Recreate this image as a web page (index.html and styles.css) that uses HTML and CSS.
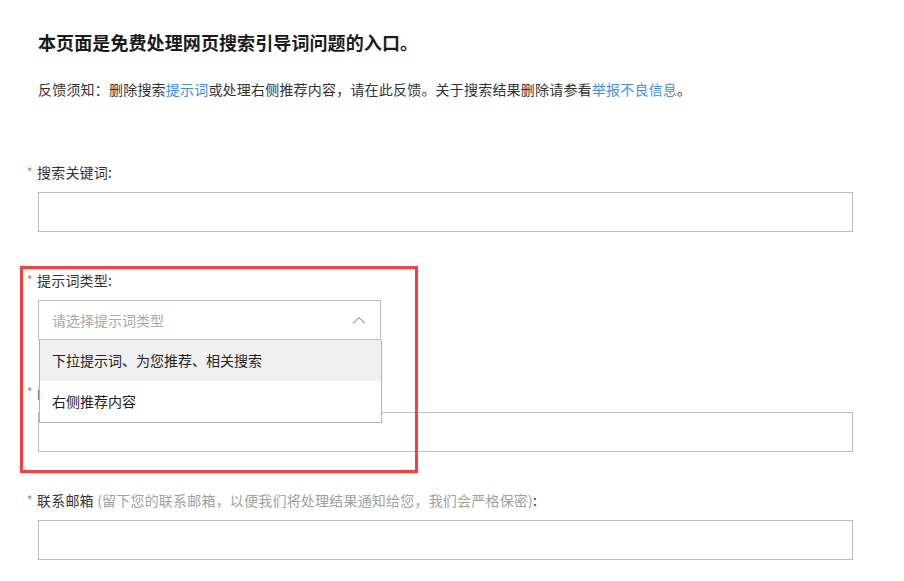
FILE: index.html
```html
<html>
<head>
    <meta charset="utf-8">
    <link rel="stylesheet" href="styles.css">
</head>
<body>
    <div class="page">
        <h1 class="title">本页面是免费处理网页搜索引导词问题的入口。</h1>
        <p class="notice">反馈须知：删除搜索<a href="#">提示词</a>或处理右侧推荐内容，请在此反馈。关于搜索结果删除请参看<a href="#">举报不良信息</a>。</p>

        <form class="form">
            <div class="field">
                <label class="label"><span class="star">*</span>搜索关键词:</label>
                <input class="input" type="text">
            </div>

            <div class="field field-select">
                <label class="label"><span class="star">*</span>提示词类型:</label>
                <div class="select">
                    <div class="select-box">
                        <span class="placeholder">请选择提示词类型</span>
                        <svg class="chevron" width="14" height="8" viewBox="0 0 14 8">
                            <polyline points="1,7.5 7,1.5 13,7.5" fill="none" stroke="#a8a8a8" stroke-width="1.2"/>
                        </svg>
                    </div>
                    <!-- dropdown open -->
                    <ul class="dropdown">
                        <li class="option active">下拉提示词、为您推荐、相关搜索</li>
                        <li class="option">右侧推荐内容</li>
                    </ul>
                </div>
            </div>

            <div class="field">
                <label class="label"><span class="star">*</span>问题描述:</label>
                <input class="input" type="text">
            </div>

            <div class="field">
                <label class="label"><span class="star">*</span>联系邮箱 <span class="hint">(留下您的联系邮箱，以便我们将处理结果通知给您，我们会严格保密)</span>:</label>
                <input class="input" type="text">
            </div>
        </form>

        <!-- highlight box -->
        <div class="highlight"></div>
    </div>
</body>
</html>
```

FILE: styles.css
```css
body {
    margin: 0;
    background-color: #fff;
    color: #333;
    font-family: "Noto Sans CJK SC", "Noto Sans", sans-serif;
}

.page {
    position: relative;
    padding: 30px 0 0 38px;
}

.title {
    margin: 0;
    font-size: 18px;
    line-height: 24px;
    font-weight: bold;
    color: #1a1a1a;
    letter-spacing: 0.1px;
}

.notice {
    margin: 25px 0 0 0;
    font-size: 14px;
    line-height: 20px;
    color: #333;
    letter-spacing: 0.2px;
}

.notice a {
    color: #3f8cf3;
    text-decoration: none;
}

.form {
    margin-top: 63px;
}

.field {
    margin-bottom: 38px;
}

.field-select {
    margin-bottom: 42px;
}

.label {
    display: block;
    height: 20px;
    font-size: 14px;
    line-height: 20px;
    margin-bottom: 10px;
    color: #333;
    letter-spacing: 0.2px;
}

.star {
    display: inline-block;
    width: 10px;
    margin-left: -11px;
    color: #f06464;
    font-size: 12px;
    line-height: 12px;
    vertical-align: top;
    padding-top: 4px;
}

.hint {
    color: #a0a0a0;
}

.input {
    display: block;
    width: 815px;
    height: 40px;
    box-sizing: border-box;
    border: 1px solid #bdbdbd;
    background-color: #fff;
    outline: none;
}

.select {
    position: relative;
    width: 343px;
}

.select-box {
    height: 40px;
    box-sizing: border-box;
    border: 1px solid #bdbdbd;
    display: flex;
    align-items: center;
    justify-content: space-between;
    padding: 0 14px 0 13px;
}

.placeholder {
    font-size: 14px;
    color: #a8a8a8;
}

.chevron {
    display: block;
}

.dropdown {
    position: absolute;
    top: 40px;
    left: 1px;
    z-index: 2;
    width: 343px;
    box-sizing: border-box;
    margin: 0;
    padding: 0;
    list-style: none;
    background-color: #fff;
    border: 1px solid #b4b4b4;
    border-top: none;
}

.option {
    height: 41px;
    line-height: 41px;
    padding-left: 12px;
    font-size: 14px;
    color: #222;
}

.option.active {
    background-color: #f0f0f0;
}

.highlight {
    position: absolute;
    left: 20px;
    top: 266px;
    width: 398px;
    height: 207px;
    box-sizing: border-box;
    border: 3px solid #ff3b3b;
    z-index: 3;
}
```
